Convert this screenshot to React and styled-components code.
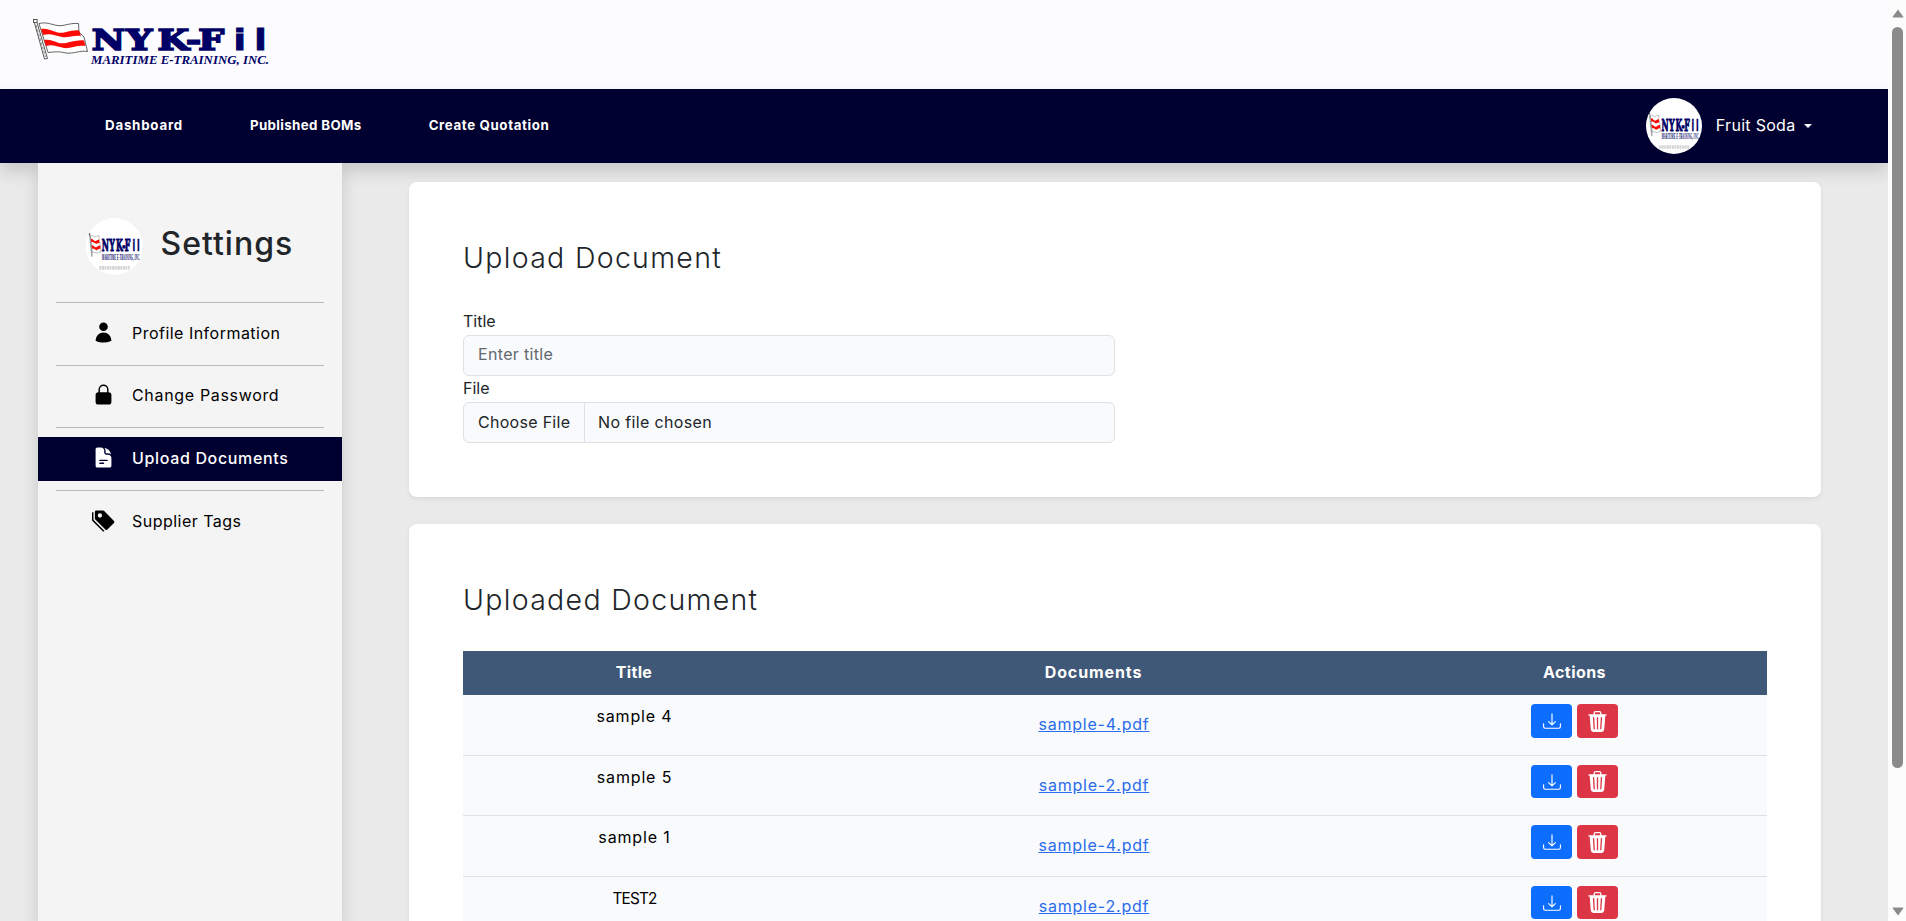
import React from "react";
import styled, { createGlobalStyle, css } from "styled-components";
import { BsDownload, BsTrash3Fill, BsTagsFill } from "react-icons/bs";
import { HiUser, HiLockClosed, HiDocumentText } from "react-icons/hi2";

const GlobalStyle = createGlobalStyle`
  *, *::before, *::after { box-sizing: border-box; }
  body {
    margin: 0;
    overflow: hidden;
    font-family: Inter, "Open Sans", sans-serif;
    font-size: 16px;
    line-height: 1.5;
    color: #212529;
  }
`;

const Screen = styled.div`
  display: flex;
  height: 921px;
  background: #eaeaea;
  overflow: hidden;
`;

const Page = styled.div`
  display: flex;
  flex-direction: column;
  flex: 1;
  min-width: 0;
  overflow: hidden;
`;

const Header = styled.header`
  flex: none;
  height: 89px;
  padding: 10px 0 0 30px;
  background: #fcfcff;
`;

const NavBar = styled.nav`
  position: relative;
  flex: none;
  display: flex;
  align-items: center;
  justify-content: space-between;
  height: 74px;
  padding: 0 76px 0 105px;
  background: #000030;
  color: #fff;
  box-shadow: 0 8px 16px rgba(0, 0, 0, 0.15);
`;

const NavLinks = styled.div`
  display: flex;
  gap: 67px;
`;

const NavLink = styled.a`
  font-size: 13.3px;
  font-weight: 700;
  letter-spacing: ${(p) => p.$track}px;
  white-space: nowrap;
`;

const UserMenu = styled.div`
  display: flex;
  align-items: center;
  letter-spacing: 0.3px;
`;

const UserName = styled.span`
  margin: 0 8.5px 2px 14px;
`;

const Caret = styled.span`
  margin-bottom: 1px;
  border: 4.5px solid transparent;
  border-top-color: #fff;
  border-bottom: 0;
`;

const AvatarRing = styled.span`
  display: block;
  flex: none;
  width: ${(p) => p.$size}px;
  height: ${(p) => p.$size}px;
  border-radius: 50%;
  overflow: hidden;
  background: #fff;

  svg { display: block; width: 100%; height: 100%; }
`;

const Body = styled.div`
  flex: 1;
  display: flex;
  align-items: stretch;
  min-height: 0;
  padding: 0 67px 0 38px;
  overflow: hidden;
`;

const Sidebar = styled.aside`
  flex: none;
  width: 304px;
  background: #f4f4f4;
  box-shadow: 0 8px 16px rgba(0, 0, 0, 0.15);
  /* keeps the panel above the shadow cast by the nav bar */
  position: relative;
`;

const SidebarHeader = styled.div`
  display: flex;
  align-items: center;
  gap: 18px;
  height: 139px;
  padding: 28px 0 0 47.5px;
`;

const SidebarTitle = styled.h1`
  margin: 0 0 6px;
  font-size: 32px;
  font-weight: 500;
  line-height: 40px;
  letter-spacing: 1px;
`;

const Divider = styled.hr`
  height: 1px;
  margin: 0 18px;
  border: 0;
  background: #bababa;
`;

const MenuItem = styled.a`
  display: flex;
  align-items: center;
  height: 43.67px;
  margin: 9px 0;
  padding: 0 0 2px 53px;
  color: #000;
  letter-spacing: ${(p) => p.$track}px;
  ${(p) =>
    p.$active &&
    css`
      background: #000030;
      color: #fff;
      font-weight: 500;
    `}
`;

const MenuIcon = styled.span`
  display: flex;
  justify-content: center;
  width: 24px;
  margin: 0 17px 1px 0;
`;

const Main = styled.main`
  flex: 1;
  display: flex;
  flex-direction: column;
  gap: 27px;
  padding: 19px 0 0 67px;
`;

const Card = styled.section`
  position: relative;
  flex: none;
  padding: 54px 54px 54.5px;
  border-radius: 8px;
  background: #fff;
  box-shadow: 0 2px 4px rgba(0, 0, 0, 0.075);
`;

const CardTitle = styled.h2`
  margin: 0 0 ${(p) => p.$gap}px;
  font-size: 28.5px;
  font-weight: 360;
  line-height: 44px;
  letter-spacing: 1.3px;
`;

const FieldLabel = styled.label`
  display: block;
  height: 26.5px;
  line-height: 24px;
`;

const Field = styled.div`
  display: flex;
  align-items: center;
  width: 652px;
  height: 40.5px;
  border: 1px solid #dee2e6;
  border-radius: 6px;
  background: #f8fafc;
  overflow: hidden;
`;

const TextInput = styled.input`
  width: 100%;
  padding: 0 14px 2px;
  border: 0;
  outline: 0;
  background: transparent;
  font: inherit;
  letter-spacing: 0.33px;

  &::placeholder { color: #62686e; opacity: 1; }
`;

const FileButton = styled.span`
  display: flex;
  align-items: center;
  width: 121px;
  height: 100%;
  padding-left: 14px;
  border-right: 1px solid #dee2e6;
  letter-spacing: 0.29px;
`;

const FileName = styled.span`
  padding-left: 13px;
  letter-spacing: 0.36px;
`;

const Row = styled.div`
  display: grid;
  grid-template-columns: 342px 577px 385px;
  justify-items: center;
  height: 60.5px;
  border-bottom: 1px solid #dee2e6;
  background: #f8fafc;
  color: #000;
`;

const HeadRow = styled(Row)`
  align-items: center;
  height: 44.1px;
  padding-bottom: 2px;
  border-bottom: 0;
  background: #3f5877;
  color: #fff;
  font-size: 16px;
  font-weight: 700;
`;

const HeadCell = styled.span`
  letter-spacing: ${(p) => p.$track}px;
`;

const TitleCell = styled.span`
  padding: ${(p) => (p.$caps ? 10 : 9.3)}px 0 0 1px;
  font-size: ${(p) => (p.$caps ? 15.3 : 16)}px;
  line-height: 24px;
  letter-spacing: ${(p) => (p.$caps ? -0.8 : 0.85)}px;
`;

const DocumentCell = styled.span`
  padding: 17px 0 0 1px;
`;

const DocumentLink = styled.a`
  color: #2a6ceb;
  letter-spacing: 0.78px;
  text-decoration: underline;
`;

const ActionCell = styled.span`
  display: flex;
  gap: 5px;
  padding-top: 9.4px;
`;

const ActionButton = styled.button`
  display: flex;
  align-items: center;
  justify-content: center;
  width: 41px;
  height: 33.5px;
  padding: 0;
  border: 0;
  border-radius: 4px;
  background: ${(p) => (p.$danger ? "#dc3545" : "#0d6efd")};
  color: #fff;
`;

const ScrollTrack = styled.div`
  flex: none;
  display: flex;
  flex-direction: column;
  align-items: center;
  width: 18px;
  padding: 9px 0 5px 1px;
  background: #fcfcfc;
`;

const ScrollThumb = styled.div`
  width: 11px;
  height: 741px;
  margin: 9px 0 auto;
  border-radius: 6px;
  background: #8b8b8b;
`;

const ScrollArrow = styled.svg`
  display: block;
  width: 12px;
  height: 9px;
  fill: #8b8b8b;
`;

function Flag() {
  return (
    <g>
      <path d="M9 13.5 C18 11 25 17 33 15.500 C39 14 44 13 48.500 13.500 L49 22 L54 27 L57.500 41.500 C50 40 44 44 36 43 C28 41 24 42 18 42.500 Z" fill="#fff" stroke="#222" strokeWidth="0.7" />
      <path d="M11 19 C19 17 25 24 34 22.500 C41 21 46 20 49 20.500 L51 26 C44 25 38 28 32 27 C24 25 20 23 13 25 Z" fill="#fb0a06" />
      <path d="M14 30 C22 28 28 35 36 33 C44 31 50 30 54 30.500 L55.500 36 C46 35 40 39 34 38 C26 36 22 34 16 36 Z" fill="#fb0a06" />
      <path d="M4.500 13 L14.500 49 L17.500 48.500 L7 12.500" stroke="#333" strokeWidth="0.8" fill="#fff" />
      <path d="M6 15 L15.500 47" stroke="#555" strokeWidth="0.7" strokeDasharray="3 1.500" />
      <rect x="3.500" y="9.500" width="3.600" height="3" fill="#fff" stroke="#333" strokeWidth="0.8" />
    </g>
  );
}

function Wordmark() {
  return (
    <g fill="#000066">
      <text
        transform="scale(1.3 1)"
        x="47.500 74 98 120 129.500 156.500 172.500"
        y="40"
        fontFamily="DejaVu Serif, serif"
        fontWeight="700"
        fontSize="28"
        stroke="#000066"
        strokeWidth="1.700"
      >
        NYK-F<tspan fontFamily="DejaVu Sans, sans-serif" strokeWidth="0.800">il</tspan>
      </text>
      <text
        x="61"
        y="54"
        fontFamily="Liberation Serif, serif"
        fontWeight="700"
        fontStyle="italic"
        fontSize="12.500"
        textLength="178"
        lengthAdjust="spacingAndGlyphs"
      >
        MARITIME E-TRAINING, INC.
      </text>
    </g>
  );
}

function Logo() {
  return (
    <svg width="250" height="60" viewBox="0 0 250 60" display="block">
      <Flag />
      <Wordmark />
    </svg>
  );
}

function Avatar({ size }) {
  return (
    <AvatarRing $size={size}>
      <svg viewBox="0 0 56 56">
        <g transform="translate(2.500 9.500) scale(0.212 0.58)">
          <Flag />
          <Wordmark />
        </g>
        <path d="M13 49 H43" stroke="#d4d4d4" strokeWidth="3.500" strokeDasharray="1.600 0.700 2.400 0.500" />
      </svg>
    </AvatarRing>
  );
}

const navLinks = [
  { label: "Dashboard", track: 0.78 },
  { label: "Published BOMs", track: 0.37 },
  { label: "Create Quotation", track: 0.62 },
];

const menu = [
  { label: "Profile Information", track: 0.48, icon: <HiUser size={23} /> },
  { label: "Change Password", track: 0.67, icon: <HiLockClosed size={23} /> },
  { label: "Upload Documents", track: 0.65, icon: <HiDocumentText size={23} />, active: true },
  { label: "Supplier Tags", track: 0.47, icon: <BsTagsFill size={23} /> },
];

const columns = [
  { label: "Title", track: 0.3 },
  { label: "Documents", track: 0.9 },
  { label: "Actions", track: 0.45 },
];

const documents = [
  { title: "sample 4", file: "sample-4.pdf" },
  { title: "sample 5", file: "sample-2.pdf" },
  { title: "sample 1", file: "sample-4.pdf" },
  { title: "TEST2", file: "sample-2.pdf", caps: true },
];

export default function App() {
  return (
    <Screen>
      <GlobalStyle />
      <Page>
        <Header>
          <Logo />
        </Header>
        <NavBar>
          <NavLinks>
            {navLinks.map((l) => (
              <NavLink key={l.label} $track={l.track}>{l.label}</NavLink>
            ))}
          </NavLinks>
          <UserMenu>
            <Avatar size={56} />
            <UserName>Fruit Soda</UserName>
            <Caret />
          </UserMenu>
        </NavBar>
        <Body>
          <Sidebar>
            <SidebarHeader>
              <Avatar size={57} />
              <SidebarTitle>Settings</SidebarTitle>
            </SidebarHeader>
            {menu.map((m) => (
              <React.Fragment key={m.label}>
                <Divider />
                <MenuItem $track={m.track} $active={m.active}>
                  <MenuIcon>{m.icon}</MenuIcon>
                  {m.label}
                </MenuItem>
              </React.Fragment>
            ))}
          </Sidebar>
          <Main>
            <Card>
              <CardTitle $gap={28.5}>Upload Document</CardTitle>
              <FieldLabel>Title</FieldLabel>
              <Field>
                <TextInput placeholder="Enter title" />
              </Field>
              <FieldLabel>File</FieldLabel>
              <Field>
                <FileButton>Choose File</FileButton>
                <FileName>No file chosen</FileName>
              </Field>
            </Card>
            <Card>
              <CardTitle $gap={29}>Uploaded Document</CardTitle>
              <HeadRow>
                {columns.map((c) => (
                  <HeadCell key={c.label} $track={c.track}>{c.label}</HeadCell>
                ))}
              </HeadRow>
              {documents.map((d) => (
                <Row key={d.title}>
                  <TitleCell $caps={d.caps}>{d.title}</TitleCell>
                  <DocumentCell>
                    <DocumentLink>{d.file}</DocumentLink>
                  </DocumentCell>
                  <ActionCell>
                    <ActionButton aria-label="Download"><BsDownload size={18} /></ActionButton>
                    <ActionButton $danger aria-label="Delete"><BsTrash3Fill size={21} /></ActionButton>
                  </ActionCell>
                </Row>
              ))}
            </Card>
          </Main>
        </Body>
      </Page>
      <ScrollTrack>
        <ScrollArrow viewBox="0 0 12 9"><path d="M6 0.500 L11.500 8 Q11.500 8.500 11 8.500 H1 Q0.500 8.500 0.500 8 Z" /></ScrollArrow>
        <ScrollThumb />
        <ScrollArrow viewBox="0 0 12 9"><path d="M6 8.500 L11.500 1 Q11.500 0.500 11 0.500 H1 Q0.500 0.500 0.500 1 Z" /></ScrollArrow>
      </ScrollTrack>
    </Screen>
  );
}
